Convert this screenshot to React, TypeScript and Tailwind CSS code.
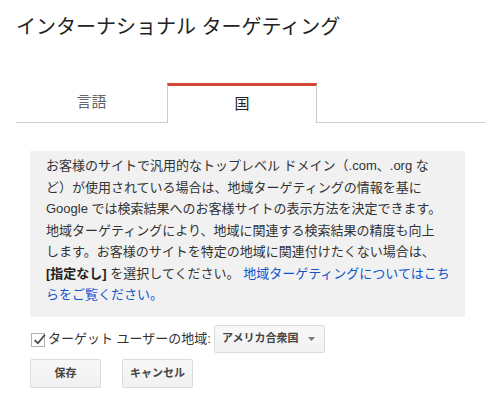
import React from "react";

const font = {
  fontFamily: '"Liberation Sans", "Noto Sans CJK JP", sans-serif',
};

export default function App() {
  return (
    <div
      className="w-[485px] h-[410px] bg-white text-[#222] overflow-hidden"
      style={font}
    >
      <div className="pt-[14px] pl-[16px] text-[20px] leading-[26px] text-[#222]">
        インターナショナル ターゲティング
      </div>

      <div className="mt-[43px] flex pl-[16px]">
        <div className="w-[151px] h-[40px] border-b border-[#cccccc] flex items-center justify-center text-[15px] text-[#666]">
          言語
        </div>
        <div className="w-[150px] h-[40px] border-t-[3px] border-t-[#d14836] border-x border-x-[#cccccc] flex items-center justify-center text-[15px] text-[#222]">
          国
        </div>
        <div className="flex-1 h-[40px] border-b border-[#cccccc]" />
      </div>

      <div className="ml-[30px] mt-[28px] w-[435px] bg-[#f1f1f1] px-[16px] pt-[4px] pb-[11px] text-[13px] leading-[21.5px] text-[#333] whitespace-nowrap">
        お客様のサイトで汎用的なトップレベル ドメイン（.com、.org な
        <br />
        ど）が使用されている場合は、地域ターゲティングの情報を基に
        <br />
        Google では検索結果へのお客様サイトの表示方法を決定できます。
        <br />
        地域ターゲティングにより、地域に関連する検索結果の精度も向上
        <br />
        します。お客様のサイトを特定の地域に関連付けたくない場合は、
        <br />
        <b className="font-bold text-[#222]">[指定なし]</b> を選択してください。{" "}
        <a className="text-[#1155cc]">地域ターゲティングについてはこち</a>
        <br />
        <a className="text-[#1155cc]">らをご覧ください。</a>
      </div>

      <div className="ml-[31px] mt-[8px] flex items-center h-[28px]">
        <div className="w-[14px] h-[14px] border border-[#b0b0b0] bg-white relative mt-[2px]">
          <svg
            viewBox="0 0 14 14"
            className="absolute left-[0px] top-[-2px] w-[15px] h-[15px]"
          >
            <path
              d="M2.5 7.5 L5.5 10.5 L12 2.5"
              fill="none"
              stroke="#444"
              strokeWidth="1.6"
            />
          </svg>
        </div>
        <span className="ml-[3px] text-[13px] text-[#333]">
          ターゲット ユーザーの地域:
        </span>
        <div className="ml-[3px] h-[28px] w-[111px] flex items-center pl-[7px] pr-[9px] border border-[#dcdcdc] rounded-[2px] bg-gradient-to-b from-[#f8f8f8] to-[#f1f1f1] text-[11px] font-bold text-[#444]">
          <span className="flex-1">アメリカ合衆国</span>
          <svg viewBox="0 0 7 4" className="w-[7px] h-[4px]">
            <path d="M0 0 L7 0 L3.5 4 Z" fill="#777" />
          </svg>
        </div>
      </div>

      <div className="ml-[30px] mt-[6px] flex gap-[21px]">
        <button className="w-[71px] h-[29px] border border-[#dcdcdc] rounded-[2px] bg-gradient-to-b from-[#f8f8f8] to-[#f1f1f1] text-[11px] font-bold text-[#444]">
          保存
        </button>
        <button className="w-[71px] h-[29px] border border-[#dcdcdc] rounded-[2px] bg-gradient-to-b from-[#f8f8f8] to-[#f1f1f1] text-[11px] font-bold text-[#444]">
          キャンセル
        </button>
      </div>
    </div>
  );
}
